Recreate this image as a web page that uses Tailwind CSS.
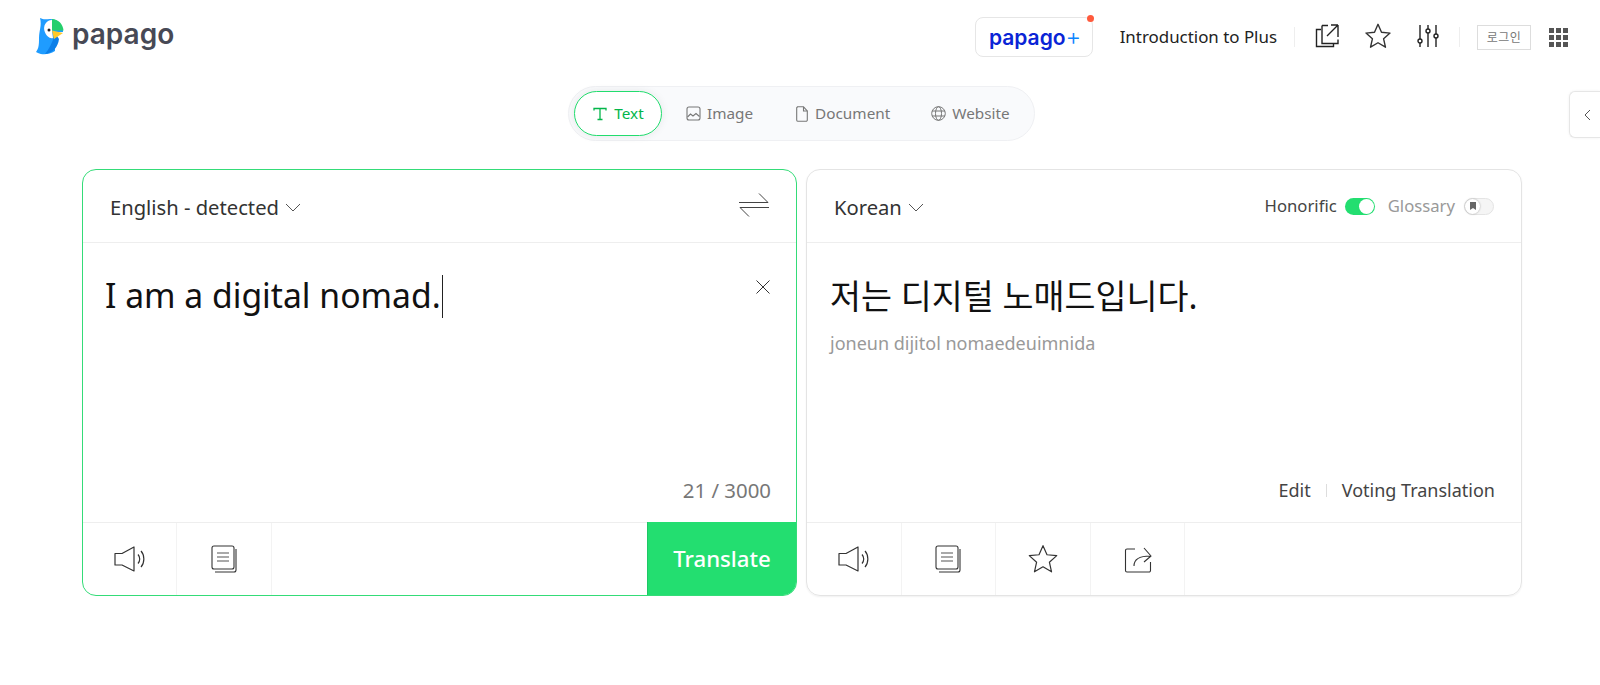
<!DOCTYPE html>
<html lang="en">
<head>
<meta charset="utf-8">
<title>Papago</title>
<script src="https://cdn.jsdelivr.net/npm/@tailwindcss/browser@4"></script>
</head>
<body class="bg-white overflow-hidden font-['Noto_Sans','Noto_Sans_CJK_KR',sans-serif] text-[#222]">
<div class="relative h-[685px] w-[1600px]">
  <!-- Header -->
  <header class="flex h-[74px] items-center pl-[36px] pr-[32px]">
    <svg class="h-[37px] w-[28px] mt-[-2px]" viewBox="0 0 28 37">
      <path d="M4 0 C8 2 10 1 14 1 C22 1 26 6 27 13 L27 14 L19 14 L19 33 C13 37 6 37 2 35 L0 34 C3 30 3 26 3 20 C3 12 6 8 4 0Z" fill="#1f9cff"/>
      <path d="M19 15 L23 21 C22 29 17 35 9 36 C13 31 17 24 19 15Z" fill="#0c7fe8"/>
      <path d="M16 1 C22 1 27 6 27.500 12.500 L16 12.500Z" fill="#25cf6c"/>
      <path d="M16 2 C10 2 7 8 8.500 13 C10 18 14 21 17 20 L16 13Z" fill="#fff"/>
      <circle cx="13" cy="12" r="1.500" fill="#222"/>
      <path d="M16 12.500 L27 15 L18 21 Z" fill="#ffc928"/>
    </svg>
    <span class="ml-[8px] mt-[-6px] text-[28px] leading-none font-semibold text-[#474955] font-['Inter',sans-serif]">papago</span>
    <div class="flex-1"></div>
    <a class="relative flex h-[40px] w-[118px] items-center justify-center rounded-[8px] border border-[#e6e6e6] pl-[3px] font-['Inter',sans-serif] text-[21px] font-semibold leading-none text-[#0a24d6]">papago<span class="text-[24px] font-light text-[#0a84ff]">+</span><span class="absolute right-[-2px] top-[-3px] h-[7px] w-[7px] rounded-full bg-[#ff5a3c]"></span></a>
    <span class="ml-[27px] text-[16.900px] font-[450] text-[#222]">Introduction to Plus</span>
    <span class="ml-[17px] h-[20px] w-px bg-[#eee]"></span>
    <svg class="ml-[19px] mt-[-3px] h-[26px] w-[26px]" viewBox="0 0 26 26" fill="none" stroke="#222" stroke-width="1.400"><path d="M8 2.500h-0v18h16v-4M7 6.500H2.500v17h17v-3"/><path d="M8 2.500h6M24 2v12M13 13L24 2M17 2h7"/></svg>
    <svg class="ml-[24px] mt-[-3px] h-[28px] w-[28px]" viewBox="0 0 24 24" fill="none" stroke="#333" stroke-width="1.200" stroke-linejoin="round"><path d="M12 2l3 6.800 7.300.7-5.500 4.900 1.600 7.200L12 17.800l-6.400 3.800 1.600-7.200L1.700 9.500 9 8.800z"/></svg>
    <svg class="ml-[25px] mt-[-3px] h-[28px] w-[22px]" viewBox="0 0 22 28" fill="none" stroke="#222" stroke-width="1.400"><path d="M3 3v22M11 3v22M19 3v22"/><circle cx="3" cy="19" r="2" fill="#fff"/><circle cx="11" cy="9" r="2" fill="#fff"/><circle cx="19" cy="14" r="2" fill="#fff"/></svg>
    <span class="ml-[20px] h-[20px] w-px bg-[#eee]"></span>
    <span class="ml-[17px] flex h-[25px] w-[54px] items-center justify-center border border-[#ddd] text-[12px] tracking-[0.5px] text-[#777] font-['Noto_Sans_CJK_KR',sans-serif]">로그인</span>
    <div class="ml-[18px] grid h-[19px] w-[19px] grid-cols-3 gap-[2px]">
      <i class="bg-[#555]"></i><i class="bg-[#555]"></i><i class="bg-[#555]"></i><i class="bg-[#555]"></i><i class="bg-[#555]"></i><i class="bg-[#555]"></i><i class="bg-[#555]"></i><i class="bg-[#555]"></i><i class="bg-[#555]"></i>
    </div>
  </header>

  <!-- Tabs -->
  <nav class="mt-[12px] ml-[568px] flex h-[55px] w-[467px] items-center rounded-full border border-[#eff0f3] bg-[#f9fafc] pl-[5px] text-[15.300px] font-[450] text-[#777]">
    <span class="flex h-[45px] w-[88px] items-center justify-center gap-[6px] rounded-full border border-[#22dd6e] bg-white text-[#03b64a] shadow-[0_0_8px_rgba(0,0,0,0.08)]">
      <svg class="h-[16px] w-[16px]" viewBox="0 0 16 16" fill="none" stroke="#03b64a" stroke-width="1.300"><path d="M2 4.500V2.500h12v2M8 2.500v11M5.500 13.500h5"/></svg>Text</span>
    <span class="ml-[24px] flex items-center gap-[6px]">
      <svg class="h-[15px] w-[15px]" viewBox="0 0 15 15" fill="none" stroke="#777" stroke-width="1.100"><rect x="1" y="1" width="13" height="13" rx="2"/><path d="M1.500 11l3-3 2.500 2 3-2.500 3.500 3"/></svg>Image</span>
    <span class="ml-[43px] flex items-center gap-[7px]">
      <svg class="h-[16px] w-[12px]" viewBox="0 0 12 16" fill="none" stroke="#777" stroke-width="1.100"><path d="M1.500.8h6L11.300 5v9a1.200 1.200 0 01-1.200 1.200H1.700A1.200 1.200 0 01.700 14V1.800z"/><path d="M7.500 1v4h3.800"/></svg>Document</span>
    <span class="ml-[41px] flex items-center gap-[6px]">
      <svg class="h-[15px] w-[15px]" viewBox="0 0 15 15" fill="none" stroke="#777" stroke-width="1"><circle cx="7.500" cy="7.500" r="6.800"/><ellipse cx="7.500" cy="7.500" rx="3" ry="6.800"/><path d="M1 5h13M1 10h13"/></svg>Website</span>
  </nav>

  <!-- Side tab -->
  <button class="absolute right-0 top-[91px] flex h-[47px] w-[31px] items-center justify-center rounded-l-[6px] border border-r-0 border-[#e6e6e6] bg-white pl-[4px] shadow-[0_0_3px_rgba(0,0,0,0.06)]">
    <svg class="h-[12px] w-[7px]" viewBox="0 0 7 12" fill="none" stroke="#555" stroke-width="1"><path d="M6 1L1 6l5 5"/></svg>
  </button>

  <!-- Panels -->
  <main class="mt-[28px] ml-[82px] flex w-[1440px] gap-[9px]">
    <section class="flex h-[427px] w-[715px] flex-col overflow-hidden rounded-[14px] border border-[#34dc78]">
      <div class="flex h-[73px] shrink-0 items-center border-b border-[#eeeeee] pl-[27px] pr-[11px] pt-[2px]">
        <span class="text-[20.200px] leading-none text-[#333]">English - detected</span>
        <svg class="ml-[6px] h-[9px] w-[16px]" viewBox="0 0 16 9" fill="none" stroke="#555" stroke-width="1"><path d="M1 1l7 7 7-7"/></svg>
        <div class="flex-1"></div>
        <svg class="h-[26px] w-[30px] mb-[5px]" viewBox="0 0 30 26" fill="none" stroke="#444" stroke-width="1"><path d="M0 10.500h29L20 1.500M30 15.500H1l9 9"/></svg>
        <span class="w-[16px]"></span>
      </div>
      <div class="flex min-h-0 flex-1 flex-col pl-[22px] pr-[25px]">
        <div class="flex flex-1 justify-between pt-[31px]">
          <div class="flex h-[44px] items-center text-[33.700px] leading-none text-[#111]">I am a digital nomad.<span class="ml-px h-[43px] w-px bg-[#222]"></span></div>
          <svg class="mr-[1px] mt-[6px] h-[14px] w-[14px]" viewBox="0 0 14 14" fill="none" stroke="#333" stroke-width="1"><path d="M.5.500l13 13M13.500.500l-13 13"/></svg>
        </div>
        <div class="pb-[19px] text-right text-[20.400px] leading-[25px] text-[#777]">21 / 3000</div>
      </div>
      <div class="flex h-[73px] shrink-0 border-t border-[#eeeeee]">
        <div class="flex w-[94px] items-center justify-center border-r border-[#f3f3f3]">
          <svg class="h-[28px] w-[32px]" viewBox="0 0 32 28" fill="none" stroke="#333" stroke-width="1.200" stroke-linejoin="round"><path d="M1 8.500h7L20 2v24L8 20H1z"/><path d="M24 9.500c2.300 2.500 2.300 6.500 0 9M27 6c3.800 4.200 3.800 11.800 0 16"/></svg>
        </div>
        <div class="flex w-[95px] items-center justify-center border-r border-[#f3f3f3]">
          <svg class="h-[28px] w-[27px]" viewBox="0 0 27 28" fill="none" stroke="#333" stroke-width="1.100"><rect x="1" y="1" width="22" height="23" rx="2" fill="#fff"/><path d="M25 4v21a2 2 0 01-2 2H4"/><path d="M6 8h12M6 12h12M6 16h12" stroke="#555"/></svg>
        </div>
        <div class="flex-1"></div>
        <button class="-mt-px flex w-[149px] items-center justify-center border-l border-[#1fc766] bg-[#23de70] text-[22.200px] font-medium text-white">Translate</button>
      </div>
    </section>

    <section class="flex h-[427px] w-[716px] flex-col overflow-hidden rounded-[14px] border border-[#e4e4e4] shadow-[0_1px_2px_rgba(0,0,0,0.06)]">
      <div class="flex h-[73px] shrink-0 items-center border-b border-[#eeeeee] pl-[27px] pr-[27px]">
        <span class="pt-[2px] text-[20.200px] leading-none text-[#333]">Korean</span>
        <svg class="ml-[6px] mt-[2px] h-[9px] w-[16px]" viewBox="0 0 16 9" fill="none" stroke="#555" stroke-width="1"><path d="M1 1l7 7 7-7"/></svg>
        <div class="flex-1"></div>
        <span class="text-[16.700px] text-[#444]">Honorific</span>
        <span class="ml-[8px] flex h-[17px] w-[30px] items-center justify-end rounded-full bg-[#23de70] pr-px">
          <span class="h-[15px] w-[15px] rounded-full bg-white"></span>
        </span>
        <span class="ml-[13px] text-[16.700px] text-[#999]">Glossary</span>
        <span class="ml-[9px] flex h-[17px] w-[30px] items-center rounded-full border border-[#e4e4e4] bg-[#f5f5f5]">
          <span class="flex h-[15px] w-[15px] items-center justify-center rounded-full bg-white shadow-[0_0_2px_rgba(0,0,0,0.35)]">
            <svg class="h-[8px] w-[6px]" viewBox="0 0 6 8"><path d="M0 0h6v8L3 6 0 8z" fill="#666"/></svg>
          </span>
        </span>
      </div>
      <div class="flex min-h-0 flex-1 flex-col pl-[23px] pr-[26px]">
        <div class="flex h-[44px] mt-[32px] items-center text-[33.700px] leading-none text-[#111]">저는 디지털 노매드입니다.</div>
        <div class="mt-[12px] text-[18px] leading-[24px] text-[#999]">joneun dijitol nomaedeuimnida</div>
        <div class="flex-1"></div>
        <div class="flex items-center justify-end pb-[19px] text-[18px] leading-[25px] text-[#444]">Edit<span class="mx-[15px] h-[13px] w-px bg-[#ddd]"></span>Voting Translation</div>
      </div>
      <div class="flex h-[73px] shrink-0 border-t border-[#eeeeee]">
        <div class="flex w-[95px] items-center justify-center border-r border-[#f3f3f3]">
          <svg class="h-[28px] w-[32px]" viewBox="0 0 32 28" fill="none" stroke="#333" stroke-width="1.200" stroke-linejoin="round"><path d="M1 8.500h7L20 2v24L8 20H1z"/><path d="M24 9.500c2.300 2.500 2.300 6.500 0 9M27 6c3.800 4.200 3.800 11.800 0 16"/></svg>
        </div>
        <div class="flex w-[94px] items-center justify-center border-r border-[#f3f3f3]">
          <svg class="h-[28px] w-[27px]" viewBox="0 0 27 28" fill="none" stroke="#333" stroke-width="1.100"><rect x="1" y="1" width="22" height="23" rx="2" fill="#fff"/><path d="M25 4v21a2 2 0 01-2 2H4"/><path d="M6 8h12M6 12h12M6 16h12" stroke="#555"/></svg>
        </div>
        <div class="flex w-[95px] items-center justify-center border-r border-[#f3f3f3]">
          <svg class="h-[32px] w-[32px]" viewBox="0 0 24 24" fill="none" stroke="#333" stroke-width="0.900" stroke-linejoin="round"><path d="M12 2l3 6.800 7.300.7-5.500 4.900 1.600 7.200L12 17.800l-6.400 3.800 1.600-7.200L1.700 9.500 9 8.800z"/></svg>
        </div>
        <div class="flex w-[94px] items-center justify-center border-r border-[#f3f3f3]">
          <svg class="h-[28px] w-[28px]" viewBox="0 0 28 28" fill="none" stroke="#333" stroke-width="1.100" stroke-linejoin="round"><path d="M11 4H3a1.500 1.500 0 00-1.500 1.500v20A1.500 1.500 0 003 27h22a1.500 1.500 0 001.500-1.500V17"/><path d="M10 21c0-6 4-10 16-10M20 3l7 8-7 6"/></svg>
        </div>
      </div>
    </section>
  </main>
</div>
</body>
</html>
